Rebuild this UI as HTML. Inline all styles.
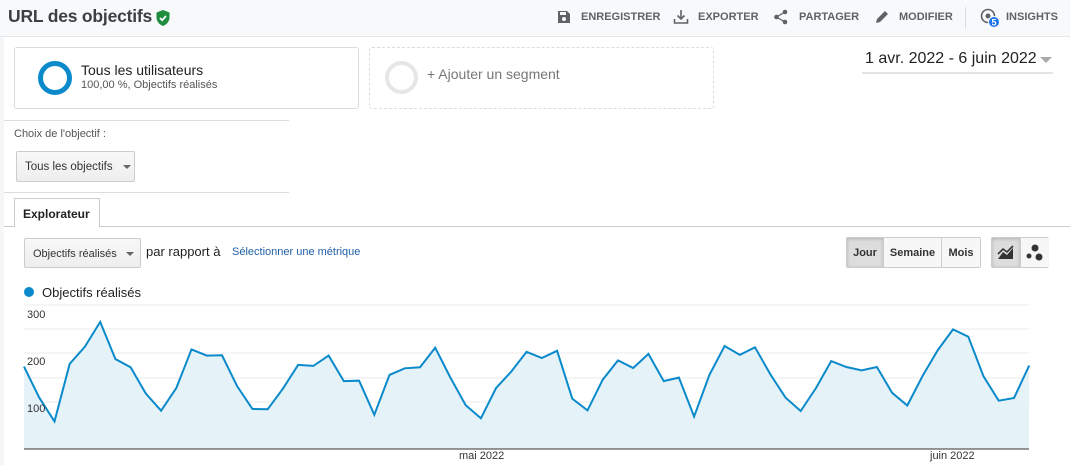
<!DOCTYPE html>
<html><head><meta charset="utf-8"><style>
*{margin:0;padding:0;box-sizing:border-box}
body{width:1070px;height:465px;overflow:hidden;background:#fff;font-family:"Liberation Sans",Arial,sans-serif;position:relative;color:#222}
.a{position:absolute}
.top{left:0;top:0;width:1070px;height:37px;background:#f8f9fa;border-bottom:1px solid #e4e6e8}
.title{left:8px;top:6px;font-size:17.5px;font-weight:bold;color:#3c4043;letter-spacing:-0.2px}
.tb{top:11px;font-size:11px;font-weight:bold;color:#5f6368}
.strip{left:0;top:37px;width:4px;height:428px;background:#f5f6f7}
.seg{top:47px;width:345px;height:62px;border:1px solid #dadce0;border-radius:3px}
.btn{border:1px solid #ccc;border-radius:2px;background:linear-gradient(#f8f8f8,#eeeeee);font-size:11px;color:#333}
.caret{display:inline-block;border-left:4px solid transparent;border-right:4px solid transparent;border-top:4px solid #666;vertical-align:middle}
</style></head><body>
<div class="a top"></div>
<div class="a title">URL des objectifs</div>
<svg class="a" style="left:155px;top:9px" width="16" height="18" viewBox="0 0 16 18"><path d="M8 1 L14.5 3.5 V8.5 C14.5 12.5 11.5 15.5 8 17 C4.5 15.5 1.5 12.5 1.5 8.5 V3.5Z" fill="#1e8e3e"/><path d="M5 9 L7.2 11.2 L11 7" stroke="#fff" stroke-width="1.8" fill="none"/></svg>

<svg class="a" style="left:556px;top:9px" width="16" height="16" viewBox="0 0 16 16"><path d="M2 2h9l3 3v9H2z" fill="#5f6368"/><rect x="4" y="3" width="6" height="3" fill="#f8f9fa"/><circle cx="8" cy="10" r="2" fill="#f8f9fa"/></svg>
<div class="a tb" style="left:581px">ENREGISTRER</div>
<svg class="a" style="left:673px;top:8px" width="16" height="17" viewBox="0 0 16 17"><path d="M8 2v9M4.5 7.5L8 11l3.5-3.5M1.5 11v4h13v-4" stroke="#5f6368" stroke-width="1.6" fill="none"/></svg>
<div class="a tb" style="left:698px">EXPORTER</div>
<svg class="a" style="left:773px;top:9px" width="16" height="16" viewBox="0 0 16 16"><circle cx="12" cy="3" r="2.3" fill="#5f6368"/><circle cx="3.5" cy="8" r="2.3" fill="#5f6368"/><circle cx="12" cy="13" r="2.3" fill="#5f6368"/><path d="M12 3L3.5 8L12 13" stroke="#5f6368" stroke-width="1.3" fill="none"/></svg>
<div class="a tb" style="left:799px">PARTAGER</div>
<svg class="a" style="left:874px;top:9px" width="16" height="16" viewBox="0 0 16 16"><path d="M2 14l1-4 8-8 3 3-8 8z" fill="#5f6368"/></svg>
<div class="a tb" style="left:899px">MODIFIER</div>
<div class="a" style="left:965px;top:7px;width:1px;height:22px;background:#dadce0"></div>
<svg class="a" style="left:979px;top:7px" width="24" height="22" viewBox="0 0 24 22"><circle cx="9" cy="9" r="6.5" stroke="#5f6368" stroke-width="1.6" fill="none"/><circle cx="9" cy="9" r="2.5" fill="#5f6368"/><circle cx="15" cy="15" r="5.5" fill="#1a73e8" stroke="#f8f9fa" stroke-width="1"/><text x="15" y="18.5" font-size="9" font-weight="bold" fill="#fff" text-anchor="middle" font-family="Liberation Sans">5</text></svg>
<div class="a tb" style="left:1006px">INSIGHTS</div>

<div class="a strip"></div>
<div class="a seg" style="left:14px"></div>
<div class="a" style="left:38px;top:61px;width:34px;height:34px;border:5px solid #0a8acb;border-radius:50%"></div>
<div class="a" style="left:81px;top:62px;font-size:14px;color:#222">Tous les utilisateurs</div>
<div class="a" style="left:81px;top:79px;font-size:11px;color:#555">100,00 %, Objectifs réalisés</div>
<div class="a seg" style="left:369px;border:1px dashed #dadce0"></div>
<div class="a" style="left:385px;top:61px;width:33px;height:33px;border:4px solid #e6e6e6;border-radius:50%"></div>
<div class="a" style="left:427px;top:66px;font-size:14px;color:#777">+ Ajouter un segment</div>
<div class="a" style="left:865px;top:50px;font-size:16px;color:#222">1 avr. 2022 - 6 juin 2022</div>
<div class="a" style="left:1040px;top:57px;border-left:6px solid transparent;border-right:6px solid transparent;border-top:6px solid #aaa"></div>
<div class="a" style="left:862px;top:72px;width:191px;height:2px;background:#e4e4e4"></div>

<div class="a" style="left:4px;top:120px;width:285px;height:1px;background:#ddd"></div>
<div class="a" style="left:14px;top:128px;font-size:11px;color:#555">Choix de l'objectif :</div>
<div class="a btn" style="left:16px;top:151px;width:119px;height:31px;padding:9px 0 0 8px;font-size:11.5px">Tous les objectifs <span class="caret" style="margin-left:7px"></span></div>
<div class="a" style="left:4px;top:192px;width:285px;height:1px;background:#ddd"></div>

<div class="a" style="left:4px;top:226px;width:1066px;height:1px;background:#ccc"></div>
<div class="a" style="left:14px;top:198px;width:86px;height:29px;border:1px solid #ccc;border-bottom:none;background:#fff;font-size:12px;font-weight:bold;padding:8px 0 0 8px">Explorateur</div>

<div class="a btn" style="left:24px;top:238px;width:117px;height:30px;padding:9px 0 0 8px">Objectifs réalisés <span class="caret" style="margin-left:6px"></span></div>
<div class="a" style="left:146px;top:244px;font-size:13px;color:#222">par rapport à</div>
<div class="a" style="left:232px;top:246px;font-size:11px;color:#1f5fa5">Sélectionner une métrique</div>

<div class="a" style="left:846px;top:237px;width:135px;height:31px;border:1px solid #ccc;border-radius:2px;display:flex;font-size:11px;font-weight:bold;color:#333">
<div style="width:36px;background:#ddd;padding-top:9px;text-align:center;box-shadow:inset 0 1px 3px rgba(0,0,0,.2)">Jour</div>
<div style="width:59px;border-left:1px solid #ccc;border-right:1px solid #ccc;background:#f7f7f7;padding-top:9px;text-align:center">Semaine</div>
<div style="flex:1;background:#f7f7f7;padding-top:9px;text-align:center">Mois</div></div>
<div class="a" style="left:991px;top:237px;width:58px;height:31px;border:1px solid #ccc;border-radius:2px;display:flex">
<div style="width:29px;background:#ddd;border-right:1px solid #ccc;box-shadow:inset 0 1px 3px rgba(0,0,0,.2)"><svg width="28" height="29" viewBox="0 0 28 29"><path d="M6 21L11 14L15 17L21 10V21Z" fill="#333"/><path d="M6 16L11 11L15 14L21 8" stroke="#333" stroke-width="1.6" fill="none"/></svg></div>
<div style="flex:1;background:#f7f7f7"><svg width="28" height="29" viewBox="0 0 28 29"><circle cx="14" cy="10" r="3.5" fill="#333"/><circle cx="8" cy="18" r="2.5" fill="#333"/><circle cx="18" cy="19" r="3.5" fill="#333"/></svg></div></div>

<div class="a" style="left:24px;top:287px;width:10px;height:10px;border-radius:50%;background:#0a8acb"></div>
<div class="a" style="left:42px;top:285px;font-size:13px;color:#222">Objectifs réalisés</div>

<svg class="a" style="left:0;top:295px" width="1070" height="170" id="ch"></svg>
<script>
var z=[208,298,367,200,150,78,186,210,286,336,270,158,176,175,265,331,332,272,203,206,176,250,249,348,232,213,210,153,240,320,358,270,222,165,183,162,301,335,246,190,212,171,250,240,353,232,148,174,152,230,298,337,270,192,209,219,209,284,321,235,160,100,121,236,307,299,205];
var pts=[];for(var i=0;i<z.length;i++){pts.push((24+i*15.23).toFixed(1)+","+(z[i]/2.904).toFixed(1));}
var s='';
[10,34,58,83,107,131].forEach(function(y){s+='<line x1="24" x2="1029" y1="'+y+'" y2="'+y+'" stroke="#ebebeb"/>';});
s+='<polygon points="24,154 '+pts.join(" ")+' 1029,154" fill="#e5f2f8"/>';
s+='<polyline points="'+pts.join(" ")+'" fill="none" stroke="#0a8acb" stroke-width="2"/>';
s+='<line x1="24" x2="1029" y1="154" y2="154" stroke="#333" stroke-width="1"/>';
s+='<text x="27" y="23" font-size="11" fill="#333" font-family="Liberation Sans">300</text><text x="27" y="70" font-size="11" fill="#333" font-family="Liberation Sans">200</text><text x="27" y="117" font-size="11" fill="#333" font-family="Liberation Sans">100</text>';
s+='<text x="459" y="164" font-size="11" fill="#333" font-family="Liberation Sans">mai 2022</text><text x="930" y="164" font-size="11" fill="#333" font-family="Liberation Sans">juin 2022</text>';
document.getElementById('ch').innerHTML=s;
</script>
</body></html>
